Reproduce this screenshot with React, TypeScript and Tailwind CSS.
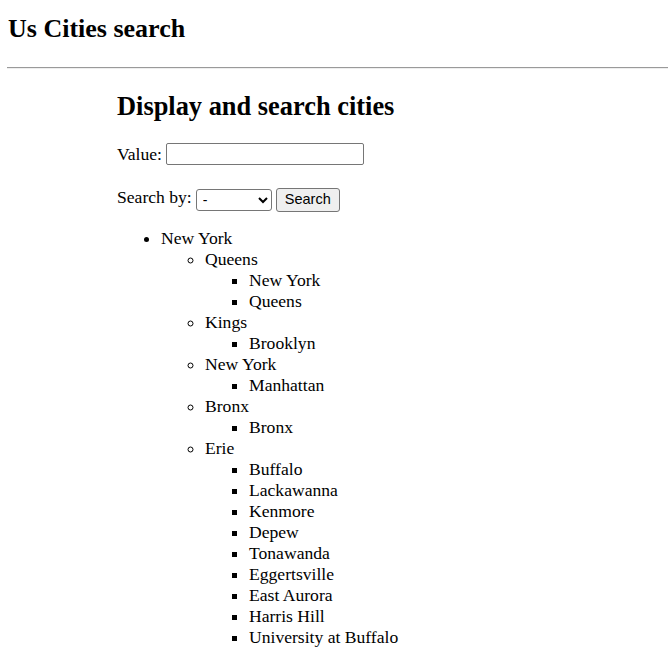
import React from "react";

type Node = { name: string; children?: Node[] };

const data: Node[] = [
  {
    name: "New York",
    children: [
      { name: "Queens", children: [{ name: "New York" }, { name: "Queens" }] },
      { name: "Kings", children: [{ name: "Brooklyn" }] },
      { name: "New York", children: [{ name: "Manhattan" }] },
      { name: "Bronx", children: [{ name: "Bronx" }] },
      {
        name: "Erie",
        children: [
          { name: "Buffalo" },
          { name: "Lackawanna" },
          { name: "Kenmore" },
          { name: "Depew" },
          { name: "Tonawanda" },
          { name: "Eggertsville" },
          { name: "East Aurora" },
          { name: "Harris Hill" },
          { name: "University at Buffalo" },
        ],
      },
    ],
  },
];

const listClass = ["list-disc", "list-[circle]", "list-[square]"];

function Tree({ nodes, level }: { nodes: Node[]; level: number }) {
  return (
    <ul className={`${listClass[level]} pl-[44px]`}>
      {nodes.map((n, i) => (
        <li key={i} className="leading-[21px]">
          {n.name}
          {n.children && <Tree nodes={n.children} level={level + 1} />}
        </li>
      ))}
    </ul>
  );
}

export default function App() {
  return (
    <div className="font-['Liberation_Serif',serif] text-black text-[17.6px] bg-white min-h-[650px]">
      <h1 className="pl-[8px] pt-[16px] text-[26px] leading-[26px] font-bold">Us Cities search</h1>
      <hr className="ml-[7px] mt-[25px] border-0 border-t border-b border-t-[#9a9a9a] border-b-[#eeeeee]" />
      <div className="ml-[117px]">
        <h2 className="mt-[22px] text-[26.4px] leading-[30px] font-bold">Display and search cities</h2>
        <div className="mt-[22px] flex items-center h-[22px]">
          <span>Value:</span>
          <input
            type="text"
            className="ml-[4px] w-[198px] h-[22px] border border-[#767676] rounded-[2px] bg-white"
          />
        </div>
        <div className="mt-[23px] flex items-center h-[24px]">
          <span className="mb-[6px]">Search by:</span>
          <select className="ml-[4px] w-[76px] h-[22px] border border-[#767676] rounded-[3px] bg-white text-[14px] font-['Liberation_Sans',sans-serif] pl-[2px] appearance-auto">
            <option>-</option>
          </select>
          <button className="ml-[4px] w-[64px] h-[24px] border border-[#767676] rounded-[3px] bg-[#efefef] text-[14.5px] font-['Liberation_Sans',sans-serif]">
            Search
          </button>
        </div>
        <div className="mt-[16px]">
          <Tree nodes={data} level={0} />
        </div>
      </div>
    </div>
  );
}
